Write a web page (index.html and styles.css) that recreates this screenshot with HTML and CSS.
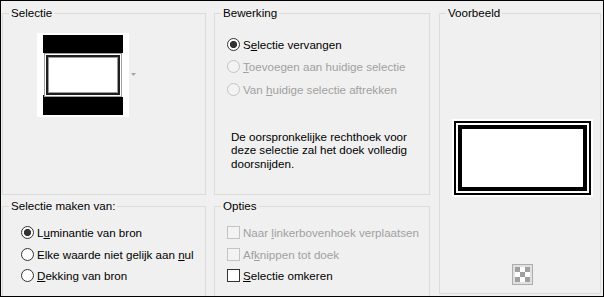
FILE: index.html
```html
<!DOCTYPE html>
<html lang="nl">

<head>
    <meta charset="UTF-8">
    <title>Selectie</title>
    <link rel="stylesheet" href="styles.css">
</head>

<body>

    <!-- Dialog window -->
    <div class="dialog">

        <!-- Source thumbnail -->
        <fieldset class="group">
            <legend>Selectie</legend>
            <div class="source">
                <div class="thumb">
                    <svg width="80" height="80" viewBox="0 0 80 80">
                        <rect x="0" y="0" width="80" height="80" fill="#fff"/>
                        <rect x="0" y="0" width="80" height="18" fill="#000"/>
                        <rect x="0" y="62" width="80" height="18" fill="#000"/>
                        <rect x="1.5" y="18.5" width="77" height="43" fill="none" stroke="#a0a0a0"/>
                        <rect x="4" y="21" width="72" height="38" fill="none" stroke="#1e1e1e" stroke-width="2"/>
                        <rect x="5.5" y="22.5" width="69" height="35" fill="none" stroke="#9a9a9a"/>
                        <rect x="0" y="60" width="1" height="2" fill="#000"/>
                    </svg>
                </div>
                <svg class="drop-arrow" width="5" height="3" viewBox="0 0 5 3">
                    <polygon points="0,0 5,0 2.5,3" fill="#a6a6a6"/>
                </svg>
            </div>
        </fieldset>

        <!-- Edit mode -->
        <fieldset class="group">
            <legend>Bewerking</legend>
            <div class="choices choices-wide">
                <label class="choice"><input type="radio" name="mode" checked><span>S<u>e</u>lectie vervangen</span></label>
                <label class="choice disabled"><input type="radio" name="mode" disabled><span><u>T</u>oevoegen aan huidige selectie</span></label>
                <label class="choice disabled"><input type="radio" name="mode" disabled><span>Van <u>h</u>uidige selectie aftrekken</span></label>
            </div>
            <p class="note">De oorspronkelijke rechthoek voor<br>deze selectie zal het doek volledig<br>doorsnijden.</p>
        </fieldset>

        <!-- Preview -->
        <fieldset class="group preview-group">
            <legend>Voorbeeld</legend>
            <div class="preview-column">
                <div class="preview">
                    <div class="preview-frame">
                        <div class="preview-inner"></div>
                    </div>
                </div>
                <div class="checker-btn">
                    <svg width="15" height="15" viewBox="0 0 15 15">
                        <rect x="0" y="0" width="15" height="15" fill="#fff"/>
                        <rect x="0" y="0" width="5" height="5" fill="#a0a0a0"/>
                        <rect x="10" y="0" width="5" height="5" fill="#a0a0a0"/>
                        <rect x="5" y="5" width="5" height="5" fill="#a0a0a0"/>
                        <rect x="0" y="10" width="5" height="5" fill="#a0a0a0"/>
                        <rect x="10" y="10" width="5" height="5" fill="#a0a0a0"/>
                    </svg>
                </div>
            </div>
        </fieldset>

        <!-- Selection source -->
        <fieldset class="group low">
            <legend>Selectie maken van:</legend>
            <div class="choices choices-left">
                <label class="choice"><input type="radio" name="source" checked><span>L<u>u</u>minantie van bron</span></label>
                <label class="choice"><input type="radio" name="source"><span>Elke waarde niet gelijk aan <u>n</u>ul</span></label>
                <label class="choice"><input type="radio" name="source"><span><u>D</u>ekking van bron</span></label>
            </div>
        </fieldset>

        <!-- Options -->
        <fieldset class="group low">
            <legend>Opties</legend>
            <div class="choices choices-right">
                <label class="choice disabled"><input type="checkbox" disabled><span>Naar <u>l</u>inkerbovenhoek verplaatsen</span></label>
                <label class="choice disabled"><input type="checkbox" disabled><span>Af<u>k</u>nippen tot doek</span></label>
                <label class="choice"><input type="checkbox"><span><u>S</u>electie omkeren</span></label>
            </div>
        </fieldset>

    </div>

</body>

</html>
```

FILE: styles.css
```css
/* Page */
body {
    margin: 0;
    background-color: #f0f0f0;
    font-family: "Liberation Sans", Arial, sans-serif;
    font-size: 11.6px;
    color: #000;
}

/* Dialog window layout */
.dialog {
    width: 604px;
    height: 297px;
    box-sizing: border-box;
    border: 1px solid #000;
    background-color: #f0f0f0;
    padding: 4px 0 0 1px;
    overflow: hidden;
    display: grid;
    grid-template-columns: 204px 216px 163px;
    grid-template-rows: 190px 110px;
    column-gap: 8px;
    row-gap: 3px;
}

/* Group boxes */
.group {
    margin: 0;
    padding: 0;
    min-width: 0;
    border: 1px solid #dcdcdc;
}

.group legend {
    margin-left: 6px;
    padding: 0 2px;
    line-height: 16px;
}

.low {
    height: 110px;
    box-sizing: border-box;
}

/* Source thumbnail */
.source {
    display: flex;
    align-items: center;
    margin: 12px 0 0 34px;
}

.thumb {
    background-color: #fff;
    padding: 2px 6px;
    line-height: 0;
}

.drop-arrow {
    margin-left: 2px;
    margin-top: -1px;
}

/* Radio and checkbox rows */
.choices {
    display: flex;
    flex-direction: column;
}

.choices-wide {
    margin: 12px 0 0 12px;
}

.choices-left {
    margin: 8px 0 0 18px;
}

.choices-right {
    margin: 8px 0 0 12px;
}

.choice {
    display: flex;
    align-items: center;
    gap: 3px;
    height: 21.5px;
    white-space: nowrap;
}

.choices-wide .choice {
    height: 22.5px;
}

.choice u {
    text-underline-offset: 1px;
}

.choice input {
    appearance: none;
    margin: 0;
    width: 13px;
    height: 13px;
    box-sizing: border-box;
    border: 1px solid #333;
    background-color: #fff;
    flex-shrink: 0;
}

.choice input[type="radio"] {
    border-radius: 50%;
}

.choice input[type="radio"]:checked {
    background: radial-gradient(circle, #333 0 3.3px, #fff 3.9px);
}

.choice.disabled {
    color: #a0a0a0;
}

.choice.disabled input {
    border-color: #c4c4c4;
    background-color: #f3f3f3;
}

/* Description text */
.note {
    margin: 29.5px 0 0 16px;
    line-height: 13.3px;
}

/* Preview */
.preview-group {
    grid-column: 3;
    grid-row: 1 / 3;
    height: 289px;
    box-sizing: border-box;
    margin-left: 1px;
}

.preview-column {
    display: flex;
    flex-direction: column;
    align-items: center;
    padding-left: 4px;
}

.preview {
    width: 141px;
    height: 78px;
    box-sizing: border-box;
    margin-top: 98px;
    padding: 2px;
    background-color: #fff;
}

.preview-frame {
    height: 100%;
    box-sizing: border-box;
    border: 2px solid #000;
    padding: 2px;
}

.preview-inner {
    height: 100%;
    box-sizing: border-box;
    border: 4px solid #000;
    background-color: #fff;
}

.checker-btn {
    width: 21px;
    height: 21px;
    box-sizing: border-box;
    margin-top: 67px;
    border: 1px solid #adadad;
    background-color: #e1e1e1;
    padding: 2px;
    line-height: 0;
}
```
